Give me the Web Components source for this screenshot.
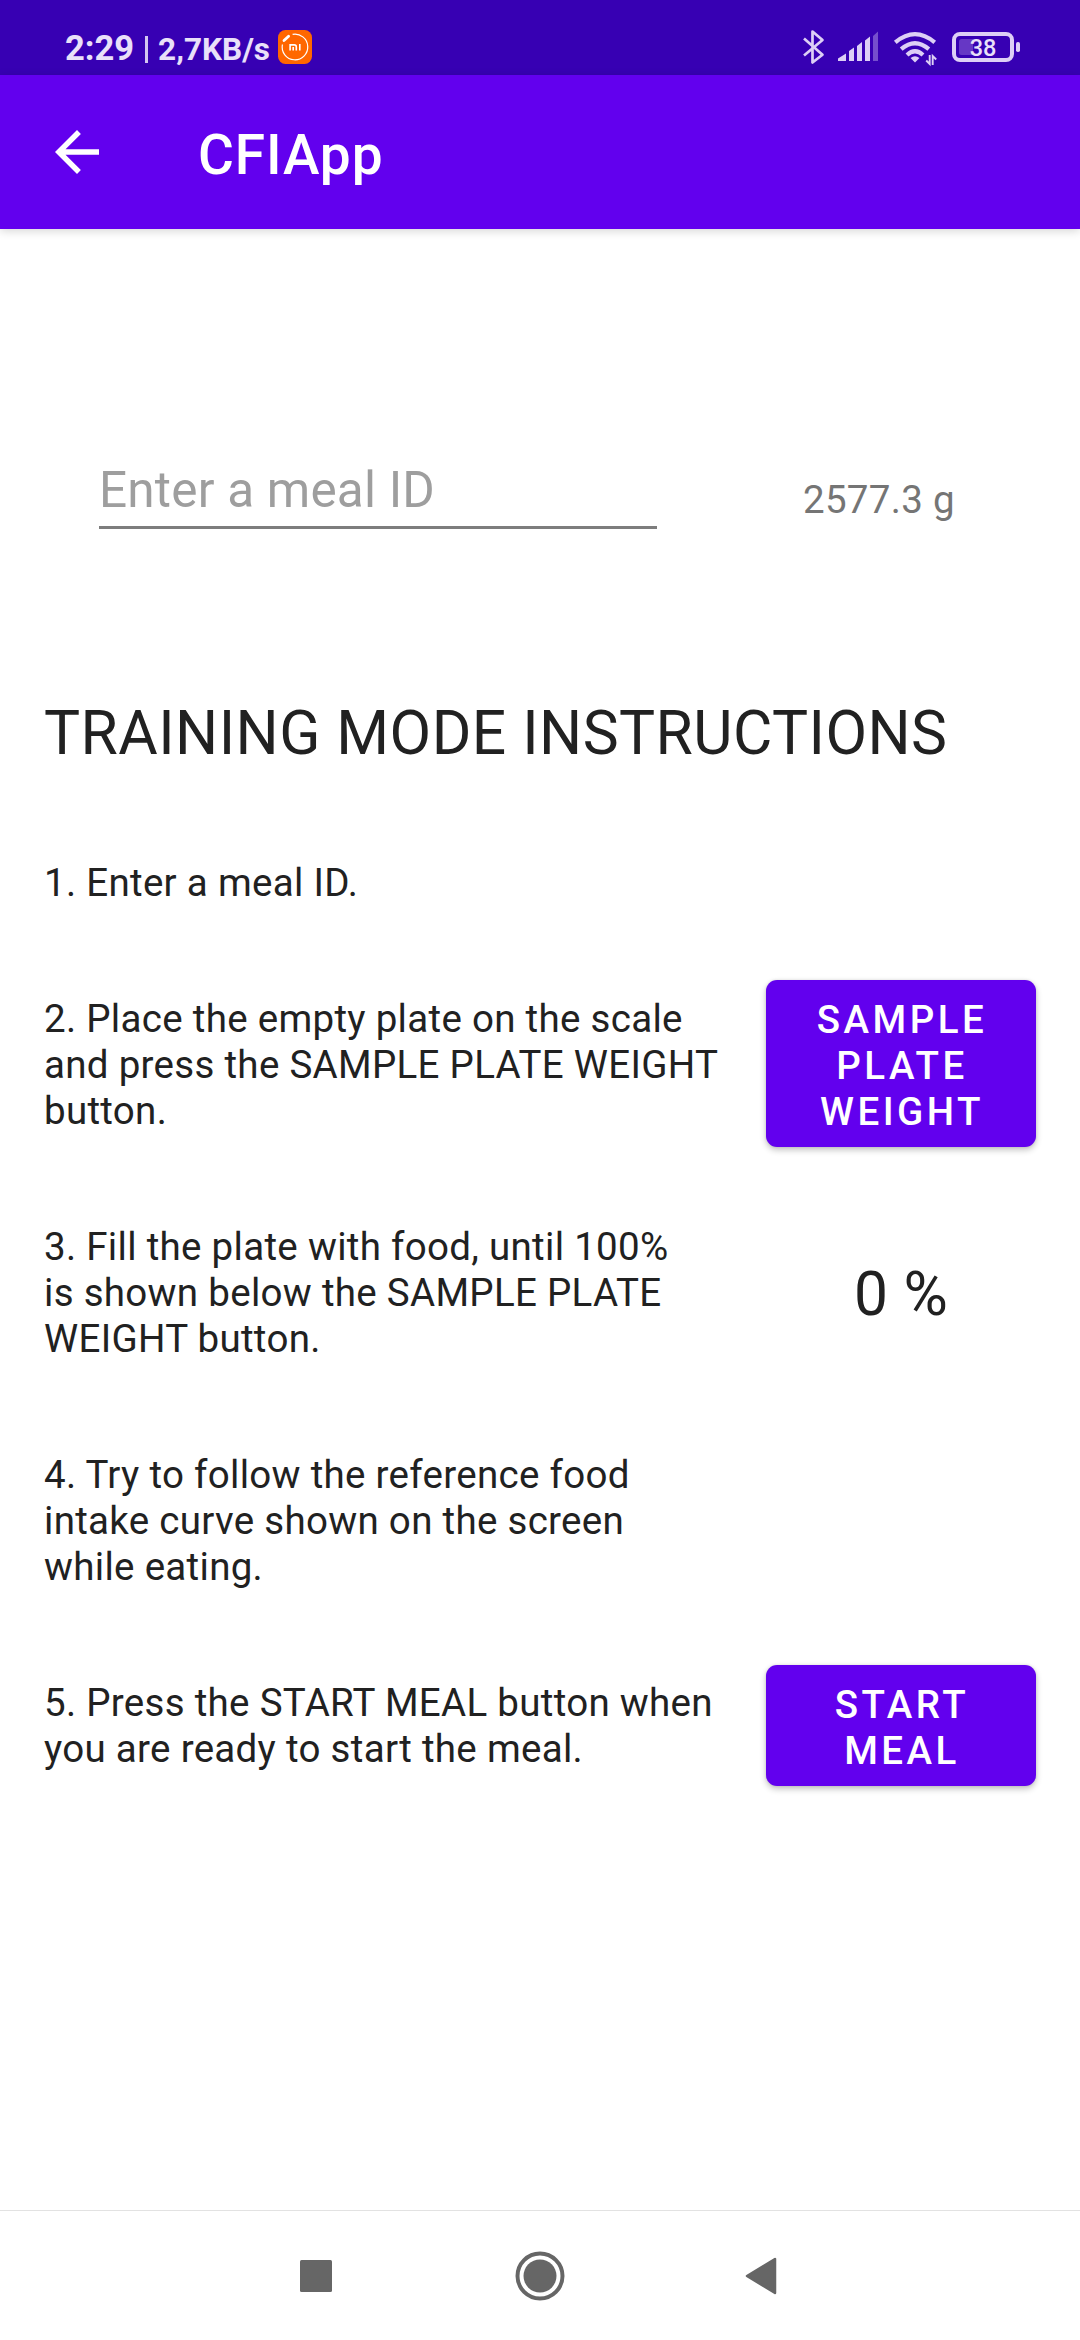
<!DOCTYPE html>
<html lang="en">
<head>
<meta charset="utf-8">
<title>CFIApp</title>
<style>
html,body{margin:0;padding:0;background:#fff}
body{font-family:Roboto,"Liberation Sans",sans-serif;color:#212121}
</style>
</head>
<body>
<cfi-screen>
  <status-bar slot="status" time="2:29" rate="2,7KB/s" battery="38"></status-bar>
  <app-bar slot="bar">CFIApp</app-bar>
  <meal-field placeholder="Enter a meal ID" weight="2577.3 g"></meal-field>
  <section-title>TRAINING MODE INSTRUCTIONS</section-title>
  <step-list>
    <step-row lines="1">1. Enter a meal ID.</step-row>
    <step-row lines="3">2. Place the empty plate on the scale<br>and press the SAMPLE PLATE WEIGHT<br>button.
      <raised-button slot="action" style="height:167px;margin-top:-3px">SAMPLE<br>PLATE<br>WEIGHT</raised-button>
    </step-row>
    <step-row lines="3">3. Fill the plate with food, until 100%<br>is shown below the SAMPLE PLATE<br>WEIGHT button.
      <fill-level slot="action">0 %</fill-level>
    </step-row>
    <step-row lines="3">4. Try to follow the reference food<br>intake curve shown on the screen<br>while eating.</step-row>
    <step-row lines="2">5. Press the START MEAL button when<br>you are ready to start the meal.
      <raised-button slot="action" style="height:121px;margin-top:-1px">START<br>MEAL</raised-button>
    </step-row>
  </step-list>
  <nav-bar slot="nav"></nav-bar>
</cfi-screen>
<script>
const define = (name, render) => customElements.define(name, class extends HTMLElement {
  constructor() {
    super();
    this.attachShadow({ mode: 'open' }).innerHTML = render(this);
  }
});

define('cfi-screen', () => `
<style>
:host{display:flex;flex-direction:column;width:1080px;height:2340px;overflow:hidden;background:#fff}
main{flex:1;display:flex;flex-direction:column;min-height:0}
</style>
<slot name="status"></slot><slot name="bar"></slot>
<main><slot></slot></main>
<slot name="nav"></slot>`);

define('status-bar', el => `
<style>
:host{display:flex;justify-content:space-between;box-sizing:border-box;height:75px;background:#3700b3;color:#e9e0f9;padding:0 60px 0 65px}
.left,.right{display:flex;height:75px}
.left{align-items:baseline;font-weight:700;line-height:40px;padding-top:28px;box-sizing:border-box;white-space:pre}
.time{font-size:34.5px}
.sep{width:3px;height:27px;background:#d3c5f1;margin:8px 10px 0 11px;align-self:flex-start}
.rate{font-size:31.5px}
.mi{width:34px;height:34px;margin-left:8px;align-self:flex-start;margin-top:2px}
.right svg{display:block}
</style>
<div class="left"><span class="time">${el.getAttribute('time')}</span><span class="sep"></span><span class="rate">${el.getAttribute('rate')}</span>
<svg class="mi" viewBox="0 0 34 34"><rect width="34" height="34" rx="7.5" fill="#ff6700"/><path d="M14.6 4.4A12.8 12.8 0 1 1 4.4 14.5" fill="none" stroke="#fff" stroke-width="1.2"/><path d="M6 10.5L10.6 6.200" stroke="#fff" stroke-width="2.800" stroke-linecap="round"/><path d="M12.100 20.500V14.900H16.300Q18.300 14.900 18.300 16.900V20.500M15.200 17V20.500M21.800 14.100V20.500" fill="none" stroke="#fff" stroke-width="1.600"/></svg></div>
<div class="right"><svg width="220" height="75" viewBox="800 0 220 75">
<path d="M804 38.500L822.500 54.700L812.500 62.500V31.500L822.500 40L804 55.500" fill="none" stroke="#ddcff6" stroke-width="2.700" stroke-linejoin="round"/>
<g fill="#ddcff6"><path d="M838 61V58.500L846 53.500V61ZM849 61V51L854 47.500V61ZM857 61V46L862 42V61ZM865 61V40.500L870 36.500V61Z"/><path d="M873 61V36L878 31.500V61Z" opacity=".38"/></g>
<g fill="none" stroke="#ddcff6" stroke-width="4.200"><path d="M895.300 42.300Q915 25.900 934.700 42.300"/><path d="M901.200 49.200Q915 37.200 928.800 49.200"/><path d="M907 55Q915 47.600 923 55"/></g>
<path d="M910.500 58Q915 54.700 919.500 58L915 62.500Z" fill="#ddcff6"/>
<path d="M929.700 55V64L926.200 60.500M932.700 65V56L936.200 59.500" fill="none" stroke="#ddcff6" stroke-width="1.900"/>
<rect x="954" y="34" width="58" height="26" rx="6" fill="none" stroke="#ddcff6" stroke-width="4"/>
<path d="M973 39V55H961.500Q959 55 959 52.500V41.500Q959 39 961.500 39Z" fill="#6637c5"/>
<rect x="1016" y="42" width="4" height="10" rx="1.800" fill="#ddcff6"/>
<text x="983" y="56" font-size="23.500" font-weight="500" text-anchor="middle" fill="#e9e0f9">${el.getAttribute('battery')}</text>
</svg></div>`);

define('app-bar', () => `
<style>
:host{display:flex;align-items:center;box-sizing:border-box;height:154px;background:#6200ee;color:#fff;padding-left:44px;box-shadow:0 2px 9px rgba(0,0,0,.17);z-index:1}
svg{width:66px;height:66px;display:block}
h1{margin:6px 0 0 88px;font:500 55px/64px Roboto,sans-serif;letter-spacing:.9px}
</style>
<svg viewBox="0 0 24 24"><path fill="#fff" d="M20 11H7.830l5.590-5.590L12 4l-8 8 8 8 1.410-1.410L7.830 13H20v-2z"/></svg>
<h1><slot></slot></h1>`);

define('meal-field', el => `
<style>
:host{display:flex;align-items:flex-start;padding:232px 0 0 99px;height:68px}
.field{width:558px;height:65px;border-bottom:3px solid #7d7d7d;font-size:49.500px;line-height:58px;letter-spacing:.2px;color:#9e9e9e}
.weight{margin:16px 0 0 146px;font-size:38.500px;line-height:46px;letter-spacing:.3px;color:#757575}
</style>
<div class="field">${el.getAttribute('placeholder')}</div>
<div class="weight">${el.getAttribute('weight')}</div>`);

define('section-title', () => `
<style>
:host{display:block;padding:169px 0 91px 44px;font-size:60.500px;line-height:71px;letter-spacing:.450px;white-space:nowrap}
</style><slot></slot>`);

define('step-list', () => `
<style>:host{display:flex;flex-direction:column;gap:90px;padding:0 44px}</style><slot></slot>`);

define('step-row', el => `
<style>
:host{display:flex;align-items:center;justify-content:space-between;height:${46 * el.getAttribute('lines')}px;font-size:38.500px;line-height:46px;letter-spacing:.3px;white-space:nowrap}
aside{width:270px;display:flex;justify-content:center}
</style>
<div><slot></slot></div><aside><slot name="action"></slot></aside>`);

define('raised-button', () => `
<style>
:host{display:flex;align-items:center;justify-content:center;box-sizing:border-box;width:270px;padding:4px 0 0 2px;border-radius:11px;background:#6200ee;color:#fff;font-weight:500;letter-spacing:3.500px;text-align:center;box-shadow:0 3px 6px rgba(0,0,0,.24),0 0 3px rgba(0,0,0,.1)}
</style><div><slot></slot></div>`);

define('fill-level', () => `
<style>:host{display:block;margin-top:3px;font-size:60.500px;line-height:71px}</style><slot></slot>`);

define('nav-bar', () => `
<style>
:host{display:flex;align-items:center;box-sizing:border-box;height:130px;border-top:1px solid #e2e2e2;background:#fff;padding-left:300px}
svg{display:block;fill:#666}
</style>
<svg width="32" height="32"><rect width="32" height="32" rx="1.500"/></svg>
<svg width="50" height="50" viewBox="0 0 50 50" style="margin-left:182.500px"><circle cx="25" cy="25" r="22.500" fill="none" stroke="#666" stroke-width="4"/><circle cx="25" cy="25" r="16.500"/></svg>
<svg width="32" height="38" viewBox="0 0 32 38" style="margin-left:180px"><path d="M2 19L30 2V36Z" stroke="#666" stroke-width="2.500" stroke-linejoin="round"/></svg>`);
</script>
</body>
</html>
